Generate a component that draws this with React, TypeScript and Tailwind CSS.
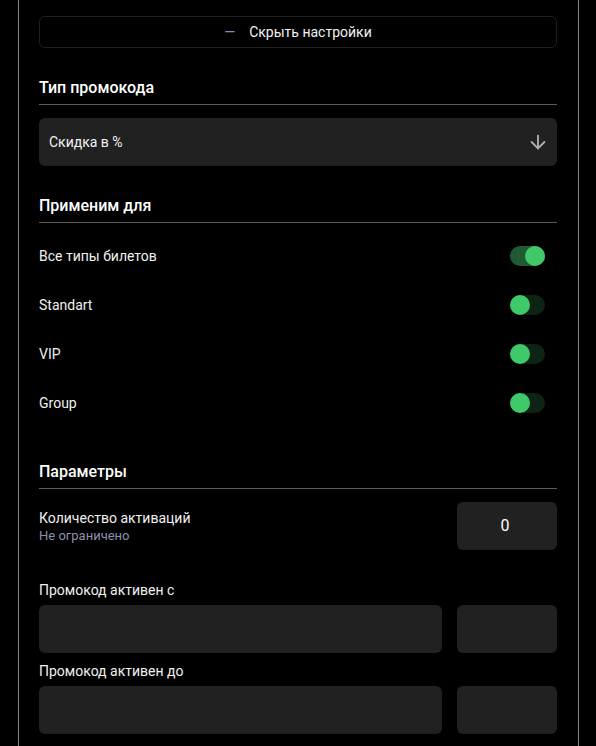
import React from "react";
import { ArrowDown } from "lucide-react";

function Toggle({ on }: { on: boolean }) {
  return (
    <div
      className={
        "relative w-[35px] h-[20px] rounded-full mr-3 " +
        (on ? "bg-[#1f5a33]" : "bg-[#0d2414]")
      }
    >
      <div
        className={
          "absolute top-0 w-[20px] h-[20px] rounded-full bg-[#3fc96b] " +
          (on ? "right-0" : "left-0")
        }
      />
    </div>
  );
}

function SectionTitle({ children }: { children: React.ReactNode }) {
  return (
    <div className="mt-7 pb-1 border-b border-[#5a5a5a] text-[16px] leading-6 font-medium text-white">
      {children}
    </div>
  );
}

export default function App() {
  const rows = [
    { label: "Все типы билетов", on: true },
    { label: "Standart", on: false },
    { label: "VIP", on: false },
    { label: "Group", on: false },
  ];
  return (
    <div
      className="w-[596px] h-[746px] bg-black overflow-hidden"
      style={{ fontFamily: "Roboto, 'Noto Sans', sans-serif" }}
    >
      <div className="ml-[18px] w-[561px] h-full border-x border-[#8a8a8a] pl-5 pr-[21px] pt-4">
        <button className="w-full h-[32px] rounded-md border border-[#1f1f1f] flex items-center justify-center gap-[14px] text-[14px] text-[#f2f2f2]">
          <span className="text-[#8c8fb3]">—</span>
          <span>Скрыть настройки</span>
        </button>

        <SectionTitle>Тип промокода</SectionTitle>
        <div className="mt-[13px] h-12 rounded-md bg-[#212121] flex items-center justify-between pl-[10px] pr-2">
          <span className="text-[14px] text-[#f2f2f2]">Скидка в %</span>
          <ArrowDown size={22} strokeWidth={2} color="#b0b0b0" />
        </div>

        <SectionTitle>Применим для</SectionTitle>
        <div className="pt-2 flex flex-col">
          {rows.map((r) => (
            <div key={r.label} className="h-[49px] flex items-center justify-between">
              <span className="text-[14px] text-[#f0f0f0] pt-[2px]">{r.label}</span>
              <Toggle on={r.on} />
            </div>
          ))}
        </div>

        <div className="mt-[33px] pb-1 border-b border-[#5a5a5a] text-[16px] leading-6 font-medium text-white">
          Параметры
        </div>
        <div className="mt-[13px] flex items-center justify-between">
          <div className="flex flex-col">
            <span className="text-[14px] leading-5 text-[#f0f0f0]">Количество активаций</span>
            <span className="text-[13px] leading-4 text-[#8e90ab]">Не ограничено</span>
          </div>
          <div className="w-[100px] h-12 rounded-md bg-[#212121] flex items-center justify-center pr-1 text-[16px] text-white">
            0
          </div>
        </div>

        <div className="mt-[30px] text-[14px] leading-5 text-[#f0f0f0]">Промокод активен с</div>
        <div className="mt-[5px] flex gap-[15px]">
          <div className="flex-1 h-12 rounded-md bg-[#212121]" />
          <div className="w-[100px] h-12 rounded-md bg-[#212121]" />
        </div>

        <div className="mt-2 text-[14px] leading-5 text-[#f0f0f0]">Промокод активен до</div>
        <div className="mt-[5px] flex gap-[15px]">
          <div className="flex-1 h-12 rounded-md bg-[#212121]" />
          <div className="w-[100px] h-12 rounded-md bg-[#212121]" />
        </div>
      </div>
    </div>
  );
}
